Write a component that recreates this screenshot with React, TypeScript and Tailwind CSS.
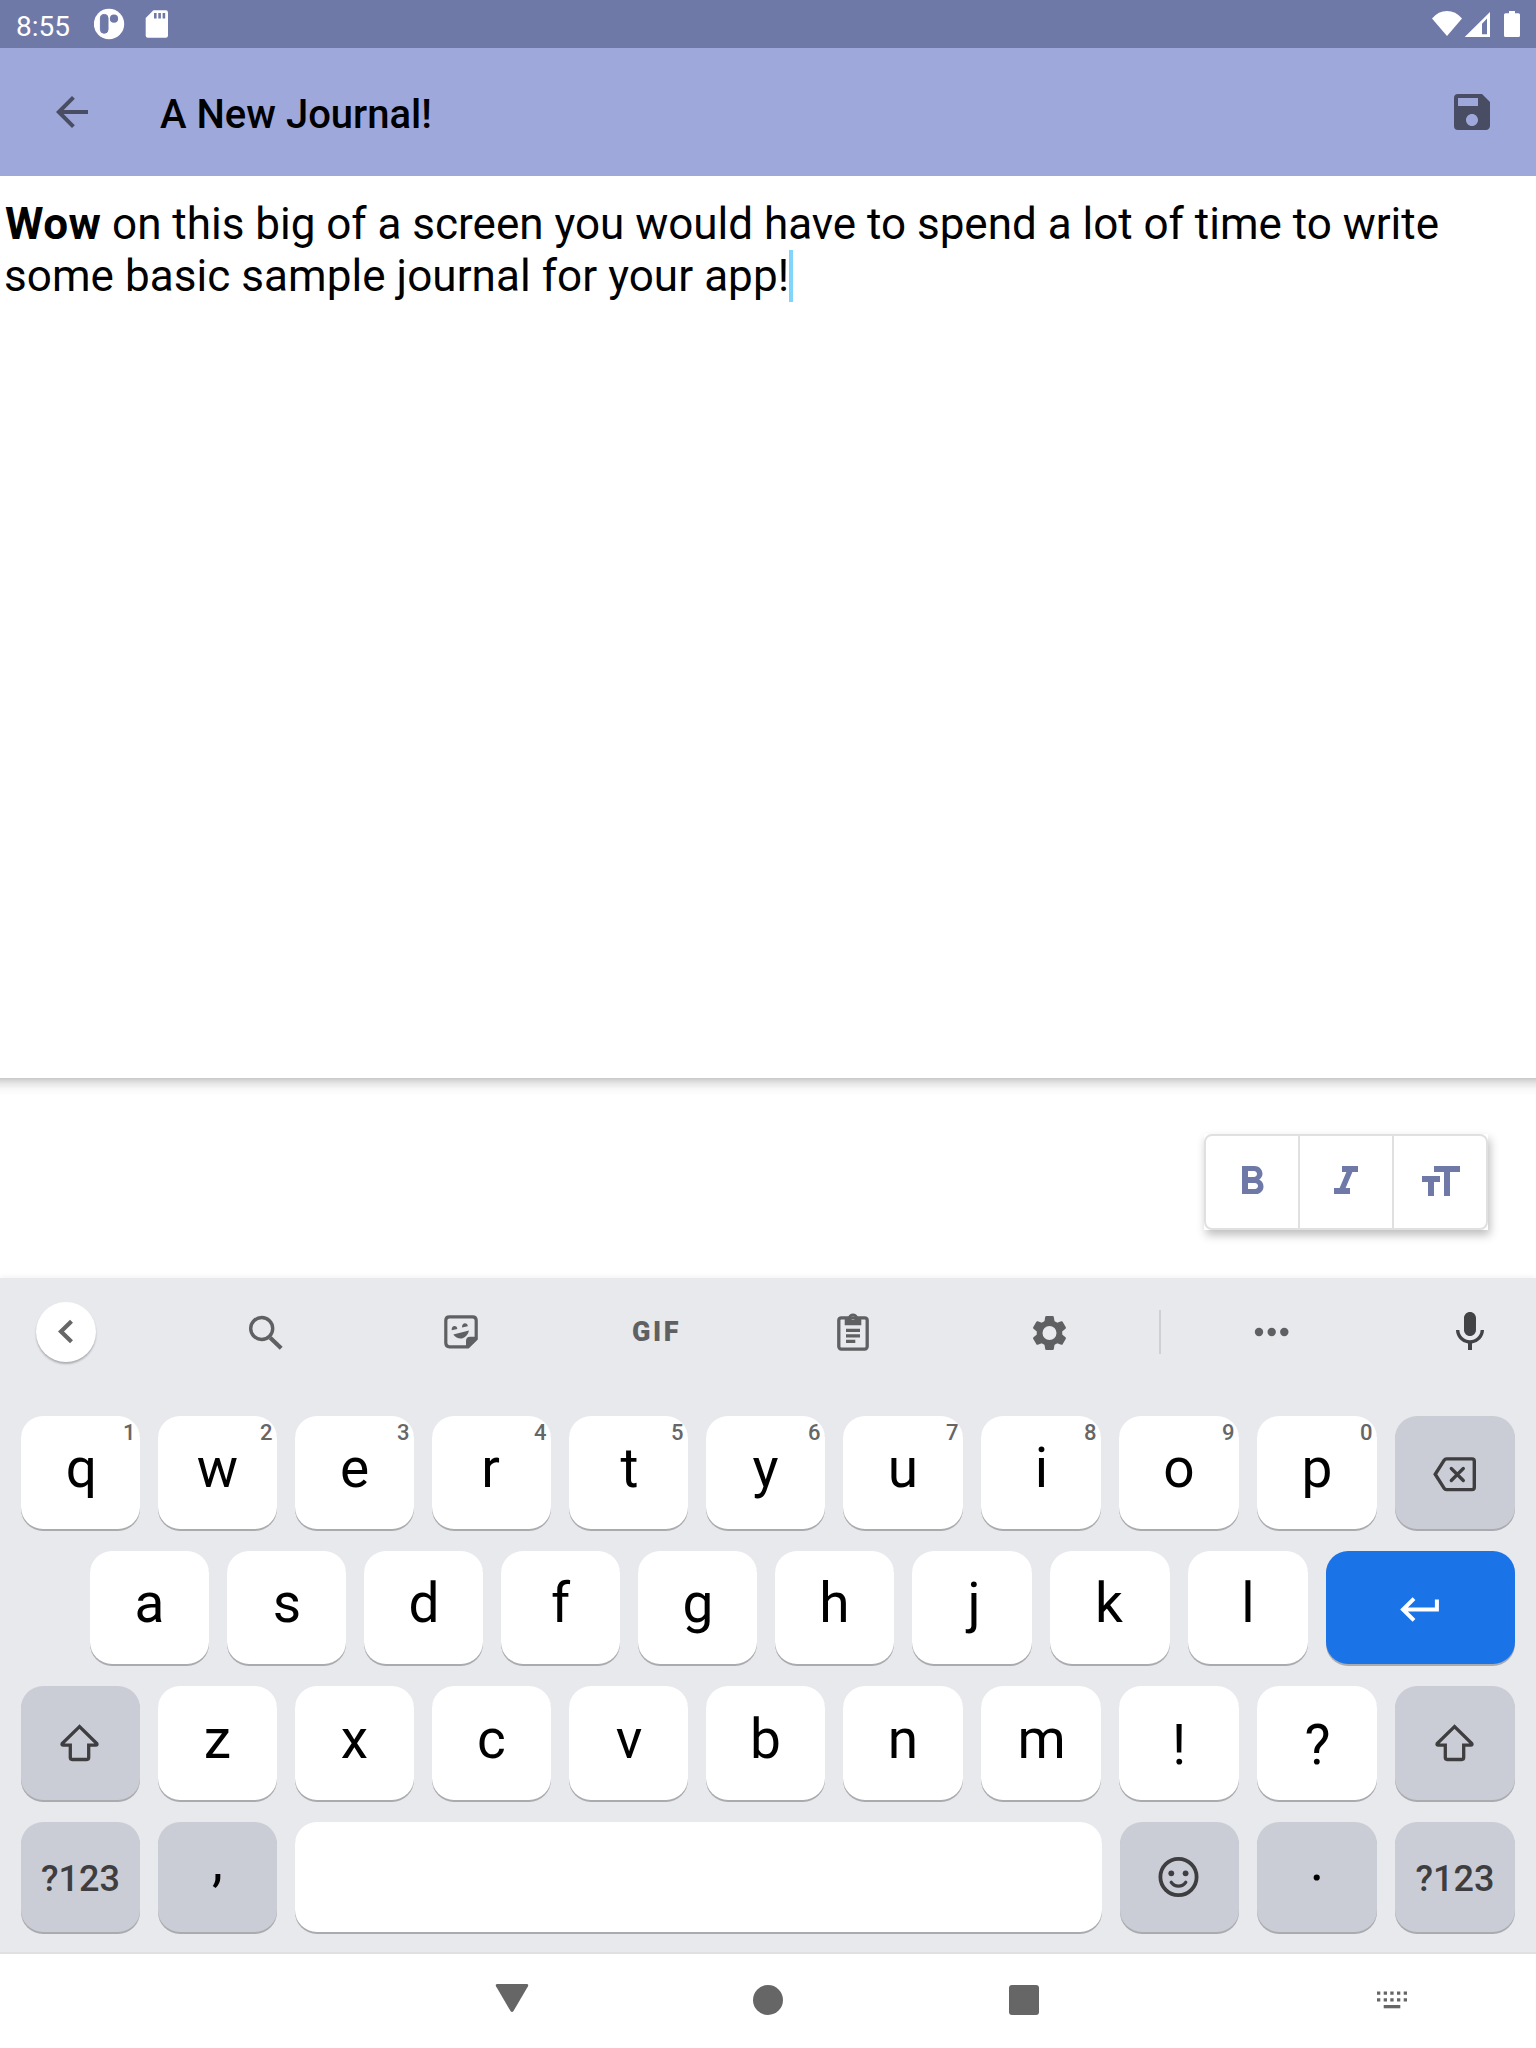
import type { ReactNode } from "react";
import { MdArrowBack, MdFormatBold, MdFormatItalic, MdFormatSize, MdMic, MdSave } from "react-icons/md";

type KeyProps = {
  width?: string;
  tone?: string;
  hint?: string;
  children?: ReactNode;
};

const WHITE = "bg-white text-black";
const GRAY = "bg-[#cbcdd6] text-[#3e3e40]";

function Key({ width = "w-[119px]", tone = WHITE, hint, children }: KeyProps) {
  return (
    <div
      className={`relative flex h-full shrink-0 justify-center rounded-[22px] shadow-[0_2px_0_#a9abae] ${width} ${tone}`}
    >
      {children}
      {hint && (
        <span className="absolute right-[4.5px] top-0 text-[22px] font-medium leading-[33px] text-[#666666]">
          {hint}
        </span>
      )}
    </div>
  );
}

// Optical centring for glyphs whose side bearings are uneven.
const NUDGE: Record<string, string> = {
  q: "pl-[2px]",
  r: "pr-[2px]",
  t: "pl-[2px]",
  i: "pl-px",
  s: "pl-px",
  d: "pl-px",
  g: "pl-px",
  j: "pl-[4px]",
  k: "pr-[2px]",
  v: "pl-px",
  m: "pl-px",
  "?": "pl-px",
};

function Letter({ leading = "leading-[104px]", children }: { leading?: string; children: string }) {
  return <span className={`text-[55px] ${leading} ${NUDGE[children] ?? ""}`}>{children}</span>;
}

function Icon({ children, className = "" }: { children: ReactNode; className?: string }) {
  return (
    <svg viewBox="0 0 48 48" className={`size-12 self-center ${className}`} fill="none" stroke="currentColor">
      {children}
    </svg>
  );
}

function ShiftIcon() {
  return (
    <Icon className="mr-px">
      <path
        d="M23.5 7.6 6.2 24.6Q5.4 26.1 7.3 26.1H14.3V38.6Q14.3 40.5 16.2 40.5H30.8Q32.7 40.5 32.7 38.6V26.1H39.7Q41.6 26.1 40.8 24.6Z"
        strokeWidth="3.3"
      />
    </Icon>
  );
}

function StatusBar() {
  return (
    <div className="flex h-12 shrink-0 items-center bg-[#6f79a8] pl-4 pr-4 text-white">
      <span className="w-[78px] pt-[5px] text-[28px] leading-none">8:55</span>
      <svg viewBox="0 0 32 32" className="size-8">
        <circle cx="15" cy="16" r="15.2" fill="#fff" />
        <rect x="6.4" y="6.4" width="7.6" height="18.8" rx="3.6" fill="#6f79a8" stroke="#6f79a8" />
        <circle cx="20" cy="10.7" r="4.1" fill="#6f79a8" />
      </svg>
      <svg viewBox="0 0 24 32" className="ml-[19px] h-8 w-6">
        <path d="M8.4 2.3H20.8Q23 2.3 23 4.5V27.6Q23 29.8 20.8 29.8H2.9Q.7 29.8.7 27.6V10Z" fill="#fff" />
        <path d="M9 5h2.6v5.6H9zM13.3 5h2.6v5.6h-2.6zM17.6 5h2.6v5.6h-2.6z" fill="#6f79a8" />
      </svg>
      <svg viewBox="0 0 88 28" className="ml-auto h-7 w-[88px]" fill="#fff">
        <path d="M15 26 0 8.4Q6.5 1 15 1T30 8.4Z" />
        <path d="M32.7 27 58 2v25ZM50 24.3h5V8.6L50 13.7Z" fillRule="evenodd" />
        <path d="M77 1h6v2.2h3.4Q88 3.2 88 4.8V25.5Q88 27 86.4 27H73.6Q72 27 72 25.5V4.8Q72 3.2 73.6 3.2H77Z" />
      </svg>
    </div>
  );
}

function AppBar() {
  return (
    <div className="flex h-32 shrink-0 items-center bg-[#9fa8da] px-12 pr-10">
      <MdArrowBack className="size-12 text-[#494d64]" />
      <h1 className="ml-16 pt-[5px] text-[40px] font-medium leading-none text-black">A New Journal!</h1>
      <MdSave className="ml-auto size-12 text-[#494d64]" />
    </div>
  );
}

function FormatBar() {
  return (
    <div className="flex h-[200px] shrink-0 justify-end bg-[linear-gradient(#c9c9c9,#e4e4e4_5px,#f8f8f8_11px,#fff_18px)] pr-12 pt-14">
      <div className="h-24 w-[284px] bg-white shadow-[2px_5px_9px_rgba(0,0,0,0.26)]">
        <div className="flex h-24 divide-x-2 divide-[#e0e0e0] rounded-lg border-2 border-[#e0e0e0] text-[#6f79a8]">
          <div className="flex flex-1 items-center justify-center">
            <MdFormatBold className="size-12" />
          </div>
          <div className="flex flex-1 items-center justify-center">
            <MdFormatItalic className="size-12" />
          </div>
          <div className="flex flex-1 items-center justify-center">
            <MdFormatSize className="size-12" />
          </div>
        </div>
      </div>
    </div>
  );
}

function Tool({ children, width = "w-[196px]" }: { children: ReactNode; width?: string }) {
  return <div className={`flex items-center justify-center ${width}`}>{children}</div>;
}

function SuggestionStrip() {
  return (
    <div className="flex h-[108px] items-center pl-9 text-[#5f6062]">
      <div className="mr-[72px] size-[60px] rounded-full bg-white shadow-[0_2px_2px_rgba(0,0,0,0.25)]">
        <svg viewBox="0 0 60 60" className="size-[60px]" fill="none" stroke="#666" strokeWidth="4.2">
          <path d="M35.5 19.2 25 29.5 35.5 39.8" />
        </svg>
      </div>
      <Tool>
        <Icon>
          <circle cx="19.7" cy="20.5" r="11" strokeWidth="3.4" />
          <path d="m28.2 29.8 11 10.5" strokeWidth="4.2" />
        </Icon>
      </Tool>
      <Tool width="w-[194px]">
        <Icon>
          <path
            d="M31 38.8H12.5Q8.8 38.8 8.8 35.1V12.5Q8.8 8.8 12.5 8.8H35.5Q39.2 8.8 39.2 12.5V30.8Z"
            strokeWidth="3.2"
          />
          <path
            d="M29 40V33Q29 28.7 33.3 28.7H40V31.5L31.5 40ZM16.3 26.4 32 22.6Q30.7 28.5 25.7 30.3 20 31.5 16.3 26.4ZM14.7 22.3Q14.3 18.5 17.2 17.9 20.2 17.8 20.3 21ZM25 19.6Q24.8 15.8 27.7 15.2 30.7 15.2 30.8 18.3Z"
            fill="currentColor"
            stroke="none"
          />
        </Icon>
      </Tool>
      <Tool>
        <span className="pl-px text-[27px] font-black leading-none tracking-[2.5px]">GIF</span>
      </Tool>
      <Tool width="w-[198px]">
        <Icon>
          <rect x="9.8" y="9.8" width="28.4" height="31.3" rx="2.5" strokeWidth="3.3" />
          <path
            d="M15.7 9H19.2A5 5 0 0 1 28.8 9H32.3V17.3H15.7ZM24 8A2 2 0 1 0 24 12 2 2 0 1 0 24 8ZM17 20.8H31V24H17ZM17 26.2H31V29.4H17ZM17 31.8H26.3V35H17Z"
            fill="currentColor"
            stroke="none"
          />
        </Icon>
      </Tool>
      <Tool>
        <Icon>
          <g transform="translate(23.5 25)" fill="currentColor" stroke="none">
            <circle r="9.9" fill="none" stroke="currentColor" strokeWidth="5.8" />
            {[0, 60, 120, 180, 240, 300].map((angle) => (
              <path
                key={angle}
                d="M-3.2-17H3.2Q4.1-17 4.3-16L5.5-9H-5.5L-4.3-16Q-4.1-17-3.2-17Z"
                transform={`rotate(${angle})`}
              />
            ))}
          </g>
        </Icon>
      </Tool>
      <div className="ml-[11px] h-11 w-0.5 bg-[#cfd0d4]" />
      <div className="ml-[87px]">
        <Icon className="block">
          <g fill="currentColor" stroke="none">
            <circle cx="11" cy="24" r="4.2" />
            <circle cx="23.7" cy="24" r="4.2" />
            <circle cx="36.3" cy="24" r="4.2" />
          </g>
        </Icon>
      </div>
      <MdMic className="ml-auto mr-[42px] size-12 text-[#424345]" />
    </div>
  );
}

const TOP_ROW = ["q", "w", "e", "r", "t", "y", "u", "i", "o", "p"];
const HOME_ROW = ["a", "s", "d", "f", "g", "h", "j", "k", "l"];
const BOTTOM_ROW = ["z", "x", "c", "v", "b", "n", "m"];

function Keyboard() {
  return (
    <div className="h-[676px] shrink-0 border-b-2 border-[#e0e0e0] bg-[#e8e9ed] shadow-[0_-1px_5px_rgba(0,0,0,0.06)]">
      <SuggestionStrip />
      <div className="mt-[30px] flex h-[113px] gap-[18px] pl-[21px]">
        {TOP_ROW.map((letter, i) => (
          <Key key={letter} hint={String((i + 1) % 10)} width={i < 6 ? "w-[119px]" : "w-[120px]"}>
            <Letter>{letter}</Letter>
          </Key>
        ))}
        <Key width="w-[120px]" tone={GRAY}>
          <Icon>
            <path
              d="M15.5 9.9H41Q43.3 9.9 43.3 12.2V38.3Q43.3 40.6 41 40.6H15.5Q14 40.6 13.2 39.4L4.2 25.25 13.2 11.1Q14 9.9 15.5 9.9Z"
              strokeWidth="3.4"
            />
            <path d="M20.3 19.5 32.3 31.5M32.3 19.5 20.3 31.5" strokeWidth="3.3" strokeLinecap="round" />
          </Icon>
        </Key>
      </div>
      <div className="mt-[22px] flex h-[113px] gap-[18px] pl-[90px]">
        {HOME_ROW.map((letter, i) => (
          <Key key={letter} width={i < 6 ? "w-[119px]" : "w-[120px]"}>
            <Letter>{letter}</Letter>
          </Key>
        ))}
        <Key width="w-[189px]" tone="bg-[#1b73e8] text-white">
          <Icon>
            <path d="M17 14.6 6 25.5 17 36.4M6 25.5H39.9V15.5" strokeWidth="4" />
          </Icon>
        </Key>
      </div>
      <div className="mt-[22px] flex h-[114px] gap-[18px] pl-[21px]">
        <Key tone={GRAY}>
          <ShiftIcon />
        </Key>
        {BOTTOM_ROW.map((letter, i) => (
          <Key key={letter} width={i < 5 ? "w-[119px]" : "w-[120px]"}>
            <Letter leading="leading-[107px]">{letter}</Letter>
          </Key>
        ))}
        <Key width="w-[120px]">
          <Letter leading="leading-[118px]">!</Letter>
        </Key>
        <Key width="w-[120px]">
          <Letter leading="leading-[118px]">?</Letter>
        </Key>
        <Key width="w-[120px]" tone={GRAY}>
          <ShiftIcon />
        </Key>
      </div>
      <div className="mt-[22px] flex h-[110px] gap-[18px] pl-[21px]">
        <Key tone={GRAY}>
          <span className="text-[36px] font-medium leading-[115px]">?123</span>
        </Key>
        <Key tone="bg-[#cbcdd6] text-black">
          <Letter leading="leading-[78px]">,</Letter>
        </Key>
        <Key width="w-[807px]" />
        <Key tone={GRAY}>
          <Icon className="mr-px">
            <circle cx="23.5" cy="24" r="18.1" strokeWidth="3.8" />
            <circle cx="16.3" cy="20.3" r="2.9" fill="currentColor" stroke="none" />
            <circle cx="30.6" cy="20.3" r="2.9" fill="currentColor" stroke="none" />
            <path d="M16.2 29.3Q19 33.2 23.5 33.2T30.8 29.3" strokeWidth="3.2" strokeLinecap="round" />
          </Icon>
        </Key>
        <Key width="w-[120px]" tone="bg-[#cbcdd6] text-black">
          <Letter leading="leading-[78px]">.</Letter>
        </Key>
        <Key width="w-[120px]" tone={GRAY}>
          <span className="text-[36px] font-medium leading-[115px]">?123</span>
        </Key>
      </div>
    </div>
  );
}

function NavBar() {
  return (
    <div className="flex h-[94px] shrink-0 bg-white pl-96 text-[#666666]">
      <div className="flex w-64 justify-center pt-[22px]">
        <svg viewBox="0 0 48 48" className="size-12" fill="currentColor">
          <path d="M9.5 8H38.5Q41 8 40 10.2L25.5 35Q24 37 22.5 35L8 10.2Q7 8 9.5 8Z" />
        </svg>
      </div>
      <div className="flex w-64 justify-center pt-[31px]">
        <div className="size-[30px] rounded-full bg-[#666666]" />
      </div>
      <div className="flex w-64 justify-center pt-[31px]">
        <div className="size-[30px] rounded-[3px] bg-[#666666]" />
      </div>
      <div className="flex flex-1 pl-[216px] pt-[22px]">
        <svg viewBox="0 0 48 48" className="size-12" fill="currentColor">
          {[9, 15.7, 22.3, 29, 35.7].map((x) => (
            <path key={x} d={`M${x} 15.5h3.3v3.3h-3.3zM${x} 22.2h3.3v3.3h-3.3z`} />
          ))}
          <path d="M15.7 29h16.6v3.3H15.7z" />
        </svg>
      </div>
    </div>
  );
}

export default function App() {
  return (
    <div className="flex h-[2048px] w-[1536px] flex-col overflow-hidden bg-white font-[Roboto,sans-serif]">
      <StatusBar />
      <AppBar />
      <div className="h-[902px] shrink-0 px-1 pt-[22px] text-[44px] leading-[52px] text-black">
        <p>
          <b className="ml-px font-bold tracking-[0.4px]">Wow</b>
          <span className="tracking-[-0.01px]"> on this big of a screen you would have to spend a lot of time to write</span>
          <br />
          <span className="tracking-[0.06px]">some basic sample journal for your app!</span>
          <span className="inline-block h-[52px] w-1 bg-[#81d4fa] align-top" />
        </p>
      </div>
      <FormatBar />
      <Keyboard />
      <NavBar />
    </div>
  );
}
